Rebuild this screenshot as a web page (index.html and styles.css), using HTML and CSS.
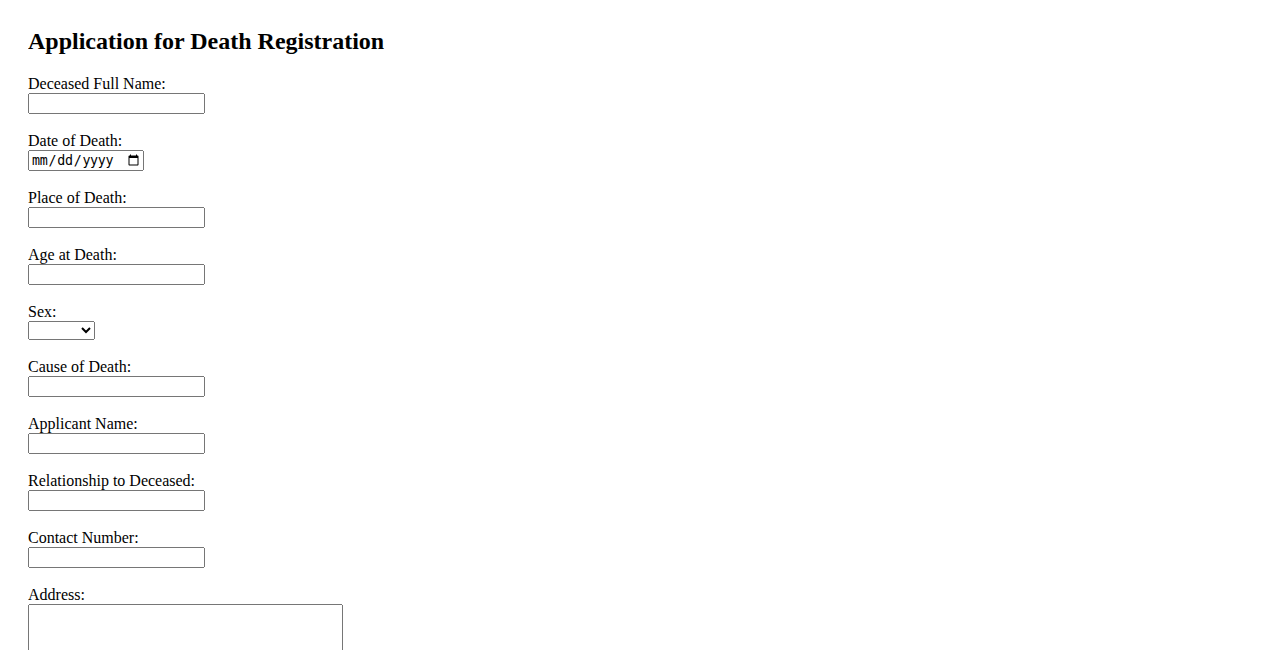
FILE: index.html
```html
<!DOCTYPE html>
<html lang="en">
<head>
<meta charset="utf-8">
<title>Application for Death Registration</title>
<link rel="stylesheet" href="styles.css">
</head>
<body class="page">
<h2 class="title">Application for Death Registration</h2>
<form class="form">
<label for="name">Deceased Full Name:</label><br>
<input class="field" type="text" id="name" name="name"><br><br>
<label for="dod">Date of Death:</label><br>
<input class="date" type="date" id="dod" name="dod"><br><br>
<label for="place">Place of Death:</label><br>
<input class="field" type="text" id="place" name="place"><br><br>
<label for="age">Age at Death:</label><br>
<input class="field" type="text" id="age" name="age"><br><br>
<label for="sex">Sex:</label><br>
<select id="sex" name="sex" class="sex">
<option value=""></option>
<option value="male">Male</option>
<option value="female">Female</option>
</select><br><br>
<label for="cause">Cause of Death:</label><br>
<input class="field" type="text" id="cause" name="cause"><br><br>
<label for="applicant">Applicant Name:</label><br>
<input class="field" type="text" id="applicant" name="applicant"><br><br>
<label for="rel">Relationship to Deceased:</label><br>
<input class="field" type="text" id="rel" name="rel"><br><br>
<label for="phone">Contact Number:</label><br>
<input class="field" type="text" id="phone" name="phone"><br><br>
<label for="address">Address:</label><br>
<textarea class="area" id="address" name="address" rows="4" cols="40"></textarea><br><br>
<input type="submit" value="Submit">
</form>
</body>
</html>
```

FILE: styles.css
```css
.page {
  margin: 28px;
  font-family: "Liberation Serif", "Times New Roman", serif;
  font-size: 16px;
  color: #000;
  background: #fff;
}
.title {
  font-size: 24px;
  font-weight: bold;
  margin: 0 0 20px 0;
}
.form {
  margin: 0;
}
.field {
  width: 177px;
  box-sizing: border-box;
}
.date {
  width: 116px;
  box-sizing: border-box;
  letter-spacing: -0.3px;
}
.sex {
  width: 67px;
}
.area {
  width: 315px;
  box-sizing: border-box;
}
```
